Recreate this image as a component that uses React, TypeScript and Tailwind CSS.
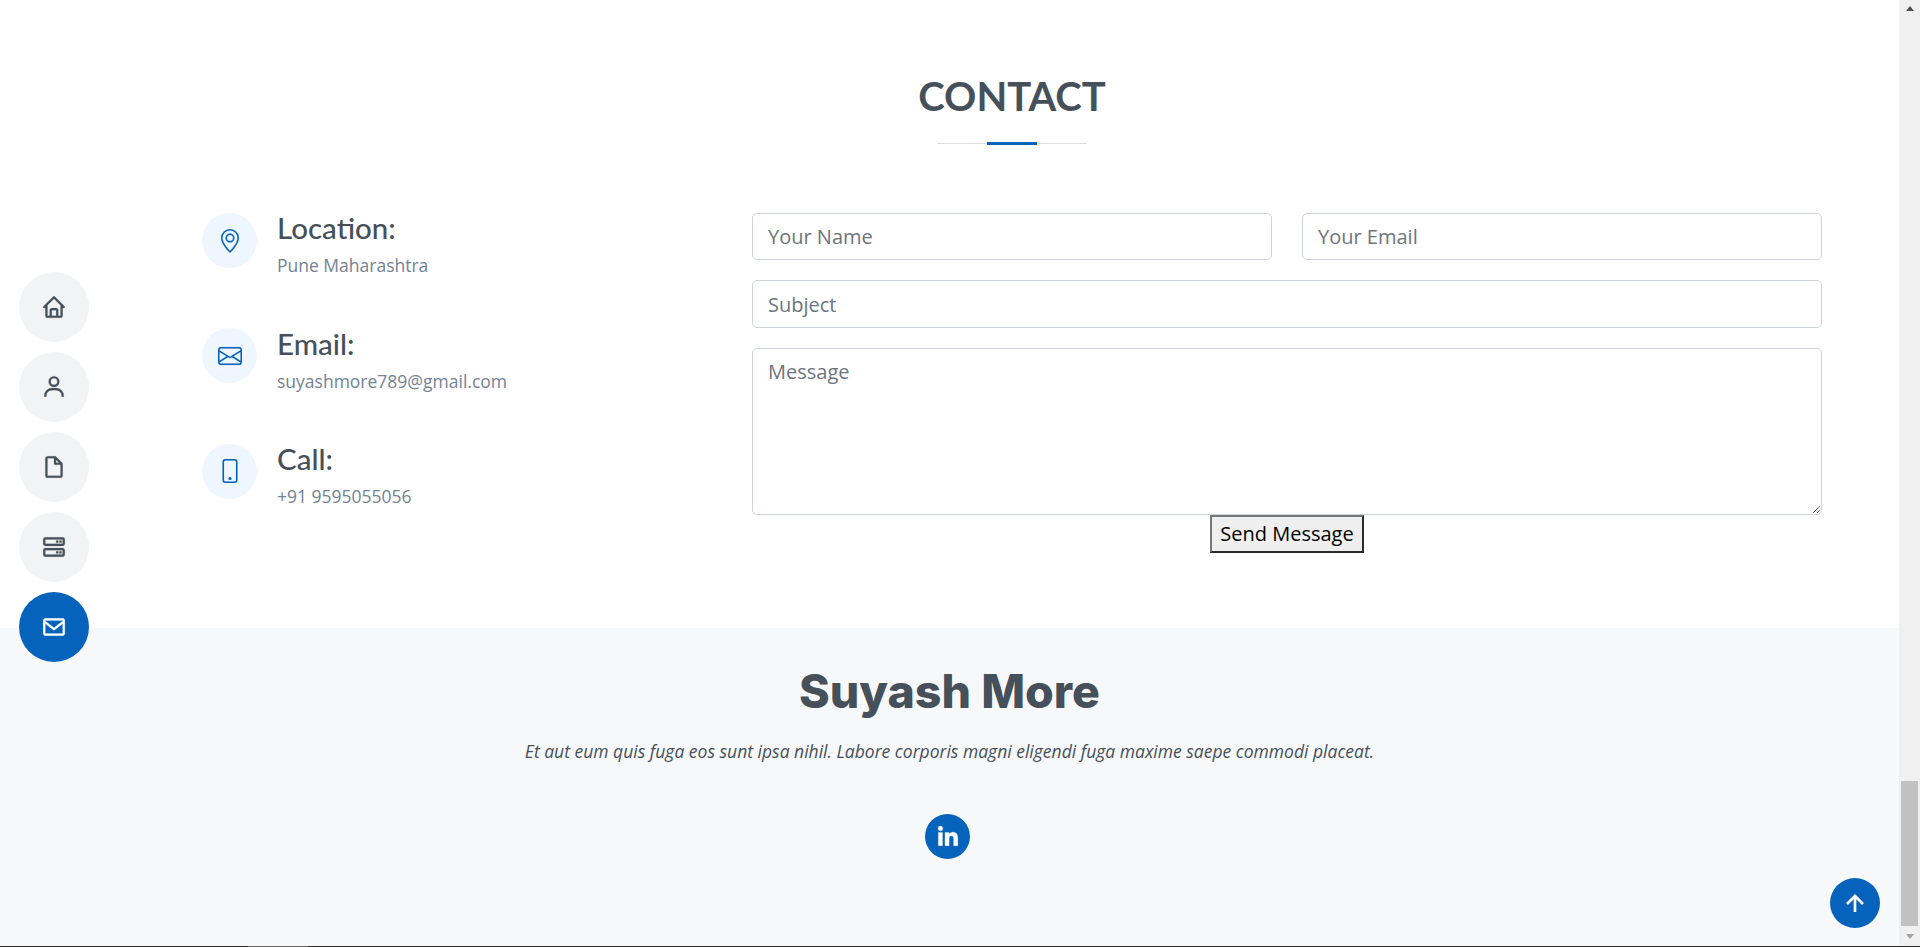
import {
  BiEnvelope,
  BiFileBlank,
  BiHome,
  BiLogoLinkedin,
  BiServer,
  BiUpArrowAlt,
  BiUser,
} from "react-icons/bi";
import { BsEnvelope, BsGeoAlt, BsPhone } from "react-icons/bs";

const navItems = [
  { icon: BiHome, active: false },
  { icon: BiUser, active: false },
  { icon: BiFileBlank, active: false },
  { icon: BiServer, active: false },
  { icon: BiEnvelope, active: true },
];

const infoItems = [
  { icon: BsGeoAlt, title: "Location:", text: "Pune Maharashtra" },
  { icon: BsEnvelope, title: "Email:", text: "suyashmore789@gmail.com" },
  { icon: BsPhone, title: "Call:", text: "+91 9595055056" },
];

const inputClass =
  "w-full px-[15px] border border-[#ced4da] rounded-[5px] text-[20px] placeholder:text-[#6c757d] outline-none bg-white";

export default function App() {
  return (
    <div className="relative flex h-screen overflow-hidden bg-white font-['Open_Sans',sans-serif]">
      <div className="flex flex-col flex-1 min-w-0">
        <section className="h-[628px] pt-[72px] pl-[202px] pr-[77px] shrink-0">
          <div className="flex flex-col items-center">
            <h2 className="text-[40px] leading-[48px] font-bold text-[#45505b] font-['Lato',sans-serif]">
              CONTACT
            </h2>
            <div className="flex items-center mt-[22px]">
              <div className="w-[50px] h-px bg-[#dddddd]" />
              <div className="w-[50px] h-[3px] bg-[#0563bb]" />
              <div className="w-[50px] h-px bg-[#dddddd]" />
            </div>
          </div>

          <div className="flex mt-[68px]">
            <div className="w-[550px] shrink-0 flex flex-col gap-[60.4px]">
              {infoItems.map((item) => (
                <div key={item.title} className="flex h-[55px]">
                  <div className="flex items-center justify-center w-[55px] h-[55px] rounded-full bg-[#eef7ff] text-[#0563bb] shrink-0">
                    <item.icon size={24} className="stroke-[0.08]" />
                  </div>
                  <div className="ml-[20px] -mt-[1.8px]">
                    <h4 className="text-[29.5px] leading-[34px] font-medium text-[#45505b] font-['Lato',sans-serif]">
                      {item.title}
                    </h4>
                    <p className="mt-[8px] text-[17.5px] leading-[24px] text-[#728394]">
                      {item.text}
                    </p>
                  </div>
                </div>
              ))}
            </div>

            <form className="flex flex-col flex-1 min-w-0">
              <div className="flex gap-[30px]">
                <input className={`${inputClass} h-[47px]`} placeholder="Your Name" />
                <input className={`${inputClass} h-[47px]`} placeholder="Your Email" />
              </div>
              <input className={`${inputClass} h-[48px] mt-5`} placeholder="Subject" />
              <textarea
                className="block w-full h-[167px] mt-5 px-[15px] py-2 border border-[#ced4da] rounded-[5px] text-[20px] leading-[30px] placeholder:text-[#6c757d] outline-none bg-white"
                placeholder="Message"
              />
              <div className="flex justify-center">
                <button
                  type="button"
                  className="h-[38px] px-2 border-2 border-[#767676] border-r-[#2b2b2b] border-b-[#2b2b2b] bg-[#efefef] text-[20px] leading-none text-black"
                >
                  Send Message
                </button>
              </div>
            </form>
          </div>
        </section>

        <footer className="flex-1 flex flex-col items-center bg-[#f7f8f9] pt-[31px]">
          <h3 className="text-[46.5px] leading-[64px] font-extrabold text-[#45505b] font-['Inter',sans-serif]">
            Suyash More
          </h3>
          <p className="mt-[16px] text-[17.5px] leading-[24px] italic text-[#45505b]">
            Et aut eum quis fuga eos sunt ipsa nihil. Labore corporis magni eligendi fuga maxime saepe commodi placeat.
          </p>
          <a className="flex items-center justify-center w-[45px] h-[45px] mt-[50.5px] mr-[4px] rounded-full bg-[#0563bb] text-white">
            <BiLogoLinkedin size={26} className="stroke-[0.3]" />
          </a>
        </footer>
      </div>

      {/* scrollbar */}
      <div className="flex flex-col items-center w-[21px] shrink-0 bg-[#f0f0f0]">
        <div className="flex-1 w-full flex justify-center pt-[6px]">
          <div className="w-0 h-0 border-x-[4.5px] border-x-transparent border-b-[5px] border-b-[#505050]" />
        </div>
        <div className="w-[17px] h-[145px] bg-[#c1c1c1]" />
        <div className="flex items-center justify-center h-[21px]">
          <div className="w-0 h-0 border-x-[4.5px] border-x-transparent border-t-[5px] border-t-[#a3a3a3]" />
        </div>
      </div>

      <div className="absolute left-0 right-0 bottom-0 h-px bg-[#2b2b2b]" />
      <div className="absolute left-[248px] bottom-0 w-[60px] h-px bg-[#666666]" />

      <nav className="absolute left-[19px] top-[272px] flex flex-col gap-[10px]">
        {navItems.map((item, i) => (
          <a
            key={i}
            className={
              item.active
                ? "flex items-center justify-center w-[70px] h-[70px] rounded-full bg-[#0563bb] text-white"
                : "flex items-center justify-center w-[70px] h-[70px] rounded-full bg-[#f2f3f5] text-[#45505b]"
            }
          >
            <item.icon size={26} className="stroke-[0.15]" />
          </a>
        ))}
      </nav>

      <a className="absolute left-[1830px] top-[878px] flex items-center justify-center w-[50px] h-[50px] pt-px rounded-full bg-[#0563bb] text-white">
        <BiUpArrowAlt size={32} />
      </a>
    </div>
  );
}
